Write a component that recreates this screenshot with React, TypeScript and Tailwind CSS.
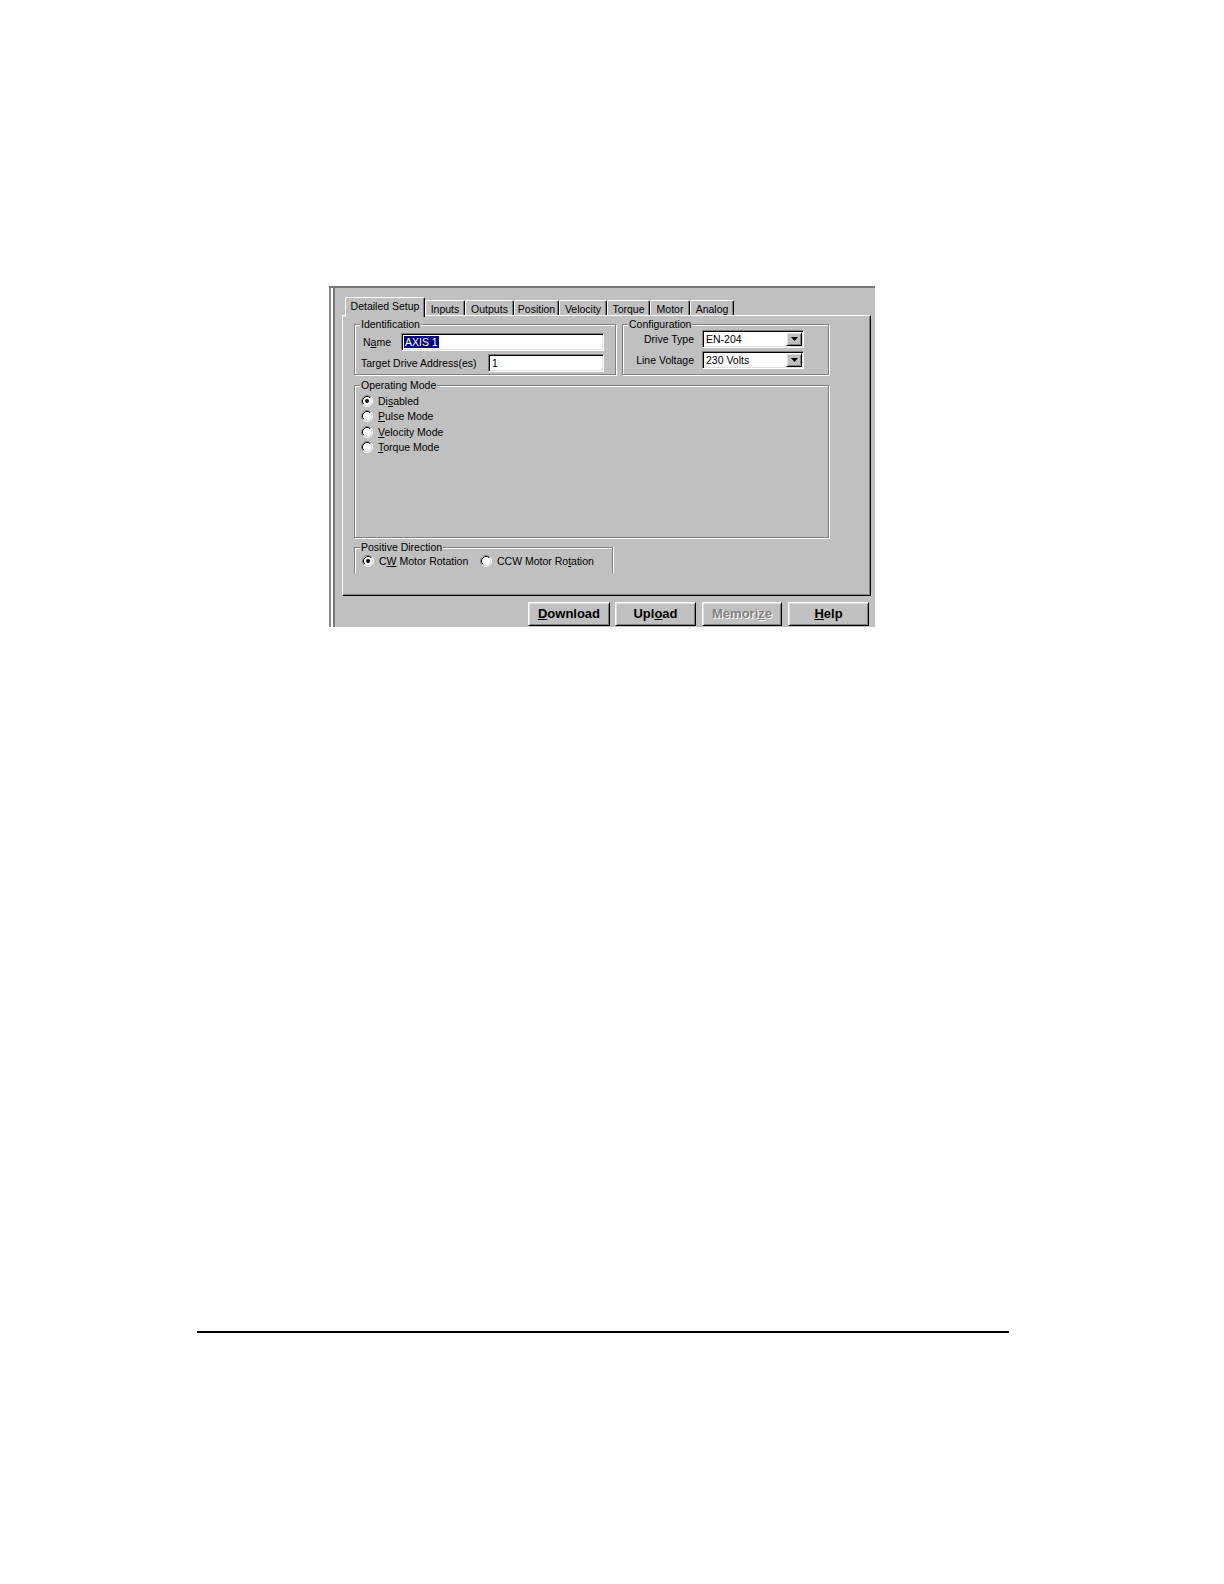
import React from "react";

const raised =
  "border border-t-white border-l-white border-r-black border-b-black shadow-[inset_1px_1px_0_#dfdfdf,inset_-1px_-1px_0_#808080]";
const sunken =
  "border border-t-[#808080] border-l-[#808080] border-r-white border-b-white shadow-[inset_1px_1px_0_#000,inset_-1px_-1px_0_#dfdfdf]";

function U({ children }: { children: React.ReactNode }) {
  return <span className="underline decoration-1 underline-offset-[1px]">{children}</span>;
}

function Radio({ checked }: { checked?: boolean }) {
  return (
    <svg width="12" height="12" viewBox="0 0 12 12" className="shrink-0">
      <circle cx="6" cy="6" r="4.5" fill="#fff" />
      <path d="M2.11 9.89 A5.5 5.5 0 0 1 9.89 2.11" stroke="#808080" strokeWidth="1" fill="none" />
      <path d="M2.11 9.89 A5.5 5.5 0 0 0 9.89 2.11" stroke="#fff" strokeWidth="1" fill="none" />
      <path d="M2.82 9.18 A4.5 4.5 0 0 1 9.18 2.82" stroke="#000" strokeWidth="1" fill="none" />
      <path d="M2.82 9.18 A4.5 4.5 0 0 0 9.18 2.82" stroke="#dfdfdf" strokeWidth="1" fill="none" />
      {checked && <circle cx="6" cy="6" r="2" fill="#000" />}
    </svg>
  );
}

function Group({
  title,
  className,
  open,
  children,
}: {
  title: string;
  className: string;
  open?: boolean;
  children?: React.ReactNode;
}) {
  const edge = open
    ? "border-t border-x border-[#808080] shadow-[inset_1px_1px_0_#fff,1px_0_0_#fff]"
    : "border border-[#808080] shadow-[inset_1px_1px_0_#fff,1px_1px_0_#fff]";
  return (
    <div className={`relative ${edge} ${className}`}>
      <span className="absolute left-[5px] -top-[7px] px-[1px] bg-[#c0c0c0] text-[10.5px] leading-[12px] whitespace-nowrap">
        {title}
      </span>
      {children}
    </div>
  );
}

function Select({ value }: { value: string }) {
  return (
    <div className={`w-[102px] h-[18px] bg-white flex items-center ${sunken}`}>
      <span className="flex-1 pl-[3px] text-[10.5px] leading-[12px]">{value}</span>
      <div className={`w-[16px] h-[14px] mr-[1px] bg-[#c0c0c0] flex items-center justify-center ${raised}`}>
        <svg width="7" height="4" viewBox="0 0 7 4">
          <polygon points="0,0 7,0 3.5,4" fill="#000" />
        </svg>
      </div>
    </div>
  );
}

const tabs: { label: string; w: number }[] = [
  { label: "Inputs", w: 40 },
  { label: "Outputs", w: 49 },
  { label: "Position", w: 45 },
  { label: "Velocity", w: 48 },
  { label: "Torque", w: 43 },
  { label: "Motor", w: 40 },
  { label: "Analog", w: 44 },
];

function Btn({
  children,
  w,
  disabled,
}: {
  children: React.ReactNode;
  w: string;
  disabled?: boolean;
}) {
  return (
    <div
      className={`${w} h-[24px] bg-[#c0c0c0] flex items-center justify-center pb-[1px] text-[13px] font-bold leading-[15px] ${raised} ${
        disabled ? "text-[#808080] [text-shadow:1px_1px_0_#fff]" : "text-black"
      }`}
    >
      {children}
    </div>
  );
}

function Dialog() {
  return (
    <div className="w-[546px] h-[341px] bg-[#c0c0c0] border-t-2 border-[#767676] flex overflow-hidden">
      <div className="w-[2px] bg-[#8a8a8a]" />
      <div className="w-[2px] bg-white" />
      <div className="w-[2px] bg-[#7a7a7a]" />
      <div className="flex flex-col pl-[7px] pt-[9px]">
        {/* tab strip */}
        <div className="relative z-10 flex items-end h-[18px] pl-[3px]">
          <div className="w-[80px] h-[20px] -mb-[2px] bg-[#c0c0c0] border-t border-l border-white border-r border-r-black rounded-t-[2px] shadow-[inset_-1px_0_0_#808080] flex justify-center pt-[2px] text-[10.5px] leading-[12px] whitespace-nowrap">
            Detailed Setup
          </div>
          {tabs.map((t) => (
            <div
              key={t.label}
              style={{ width: t.w }}
              className="h-[15px] bg-[#c0c0c0] border-t border-l border-white border-r border-r-black rounded-t-[2px] shadow-[inset_-1px_0_0_#808080] flex justify-center pt-[2px] text-[10.5px] leading-[12px] overflow-hidden whitespace-nowrap"
            >
              {t.label}
            </div>
          ))}
        </div>
        {/* tab page */}
        <div className="w-[529px] h-[281px] border-t border-l border-white border-r border-b border-r-black border-b-black shadow-[inset_-1px_-1px_0_#808080] flex flex-col">
          <div className="flex gap-[6px] ml-[11px] mt-[8px]">
            <Group title="Identification" className="w-[262px] h-[51px]">
              <div className="flex flex-col gap-[3px] pt-[8px]">
                <div className="flex items-center h-[18px] pl-[8px]">
                  <span className="w-[38px] text-[10.5px] leading-[12px]">
                    N<U>a</U>me
                  </span>
                  <div className={`w-[203px] h-[18px] bg-white flex items-center ${sunken}`}>
                    <span className="ml-[2px] px-[1px] bg-[#000080] text-white text-[10.5px] leading-[12px]">
                      AXIS 1
                    </span>
                  </div>
                </div>
                <div className="flex items-center h-[18px] pl-[6px]">
                  <span className="w-[127px] text-[10.5px] leading-[12px] whitespace-nowrap">
                    Target Drive Address(es)
                  </span>
                  <div className={`w-[116px] h-[18px] bg-white flex items-center ${sunken}`}>
                    <span className="ml-[3px] text-[10.5px] leading-[12px]">1</span>
                  </div>
                </div>
              </div>
            </Group>
            <Group title="Configuration" className="w-[207px] h-[51px]">
              <div className="flex flex-col gap-[3px] pt-[5px]">
                <div className="flex items-center h-[18px]">
                  <span className="w-[79px] pr-[8px] text-right text-[10.5px] leading-[12px] whitespace-nowrap">
                    Drive Type
                  </span>
                  <Select value="EN-204" />
                </div>
                <div className="flex items-center h-[18px]">
                  <span className="w-[79px] pr-[8px] text-right text-[10.5px] leading-[12px] whitespace-nowrap">
                    Line Voltage
                  </span>
                  <Select value="230 Volts" />
                </div>
              </div>
            </Group>
          </div>

          <Group title="Operating Mode" className="ml-[11px] mt-[10px] w-[475px] h-[153px]">
            <div className="flex flex-col pt-[7px] pl-[6px]">
              <div className="flex items-center gap-[5px] h-[15.5px] text-[10.5px] leading-[12px]">
                <Radio checked />
                <span>
                  Di<U>s</U>abled
                </span>
              </div>
              <div className="flex items-center gap-[5px] h-[15.5px] text-[10.5px] leading-[12px]">
                <Radio />
                <span>
                  <U>P</U>ulse Mode
                </span>
              </div>
              <div className="flex items-center gap-[5px] h-[15.5px] text-[10.5px] leading-[12px]">
                <Radio />
                <span>
                  <U>V</U>elocity Mode
                </span>
              </div>
              <div className="flex items-center gap-[5px] h-[15.5px] text-[10.5px] leading-[12px]">
                <Radio />
                <span>
                  <U>T</U>orque Mode
                </span>
              </div>
            </div>
          </Group>

          <Group title="Positive Direction" open className="ml-[11px] mt-[9px] w-[259px] h-[26px]">
            <div className="flex items-center h-[15px] mt-[5px] pl-[7px] text-[10.5px] leading-[12px]">
              <div className="w-[118px] flex items-center gap-[5px]">
                <Radio checked />
                <span className="whitespace-nowrap">
                  C<U>W</U> Motor Rotation
                </span>
              </div>
              <div className="flex items-center gap-[5px]">
                <Radio />
                <span className="whitespace-nowrap">
                  CCW Motor Ro<U>t</U>ation
                </span>
              </div>
            </div>
          </Group>
        </div>

        {/* buttons */}
        <div className="flex mt-[6px] ml-[186px]">
          <Btn w="w-[82px]">
            <U>D</U>ownload
          </Btn>
          <div className="w-[5px]" />
          <Btn w="w-[81px]">
            Upl<U>o</U>ad
          </Btn>
          <div className="w-[6px]" />
          <Btn w="w-[80px]" disabled>
            Memori<U>z</U>e
          </Btn>
          <div className="w-[6px]" />
          <Btn w="w-[81px]">
            <U>H</U>elp
          </Btn>
        </div>
      </div>
    </div>
  );
}

export default function App() {
  return (
    <div className="w-[1224px] h-[1584px] bg-white overflow-hidden font-['Liberation_Sans',Arial,sans-serif] text-black">
      <div className="pt-[286px] pl-[329px]">
        <Dialog />
      </div>
      <div className="mt-[704px] ml-[197px] w-[812px] h-[2px] bg-black" />
    </div>
  );
}
